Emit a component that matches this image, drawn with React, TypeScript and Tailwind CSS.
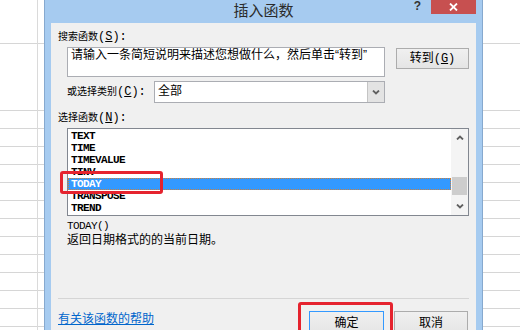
import React from 'react';

const functions = ['TEXT', 'TIME', 'TIMEVALUE', 'TINV', 'TODAY', 'TRANSPOSE', 'TREND'];
const selectedFn = 'TODAY';

// spreadsheet rows peeking out behind the dialog
const rowHeights = ['h-[44px]', 'h-[67px]', ...Array(12).fill('h-[18px]')];

const SheetColumn: React.FC<{ className?: string }> = ({ className = '' }) => (
  <div className={`flex flex-col ${className}`}>
    {rowHeights.map((h, i) => (
      <div key={i} className={`${h} shrink-0 border-b border-[#d6d6d6]`} />
    ))}
  </div>
);

const Chevron: React.FC<{ up?: boolean }> = ({ up }) => (
  <svg width="8" height="5" viewBox="0 0 8 5" className="block">
    <polyline
      points={up ? '1,4.5 4,1.5 7,4.5' : '1,0.5 4,3.5 7,0.5'}
      fill="none"
      stroke="#606060"
      strokeWidth="1.8"
    />
  </svg>
);

const App: React.FC = () => {
  return (
    <div className="relative flex h-[330px] w-[520px] overflow-hidden bg-white font-['Liberation_Sans','Noto_Sans_CJK_SC',sans-serif] text-black">
      {/* left edge of the sheet */}
      <div className="flex w-[44px] shrink-0">
        <SheetColumn className="w-[38px] border-r border-[#dadada]" />
        <SheetColumn className="w-[6px]" />
      </div>

      {/* dialog */}
      <div className="flex w-[439px] shrink-0 flex-col border-x border-[#86a9cf] bg-[#a6cbf0]">
        {/* title bar */}
        <div className="grid h-[23px] shrink-0 grid-cols-[1fr_auto_1fr]">
          <div />
          <div className="text-[15px] leading-[22px] text-[#2b2b2b]">插入函数</div>
          <div className="flex items-start justify-end pr-[6px]">
            <span className="mr-[10px] font-['Liberation_Sans',sans-serif] text-[12px] font-bold leading-[13px] text-[#333]">?</span>
            <div className="flex h-[14px] w-[45px] items-center justify-center bg-[#c75050]">
              <svg width="9" height="8" viewBox="0 0 9 8">
                <path d="M1 0.5 L8 7.5 M8 0.5 L1 7.5" stroke="#fff" strokeWidth="1.8" />
              </svg>
            </div>
          </div>
        </div>

        {/* body */}
        <div className="mx-[6px] flex flex-1 flex-col bg-[#f0f0f0] px-[7px]">
          <div className="mt-[8px] flex h-[12px] items-center text-[10px] leading-[12px]">
            搜索函数
            <span className="font-['Liberation_Mono',monospace] text-[12px] leading-[12px]">
              (<span className="underline">S</span>):
            </span>
          </div>

          <div className="ml-[9px] mt-[4px] flex items-start gap-[11px]">
            <div className="h-[30px] w-[318px] border border-[#abadb3] bg-white pl-[3px] text-[12px] leading-[14px]">
              请输入一条简短说明来描述您想做什么，然后单击“转到”
            </div>
            <button
              type="button"
              className="mt-[1px] h-[21px] w-[73px] border border-[#acacac] bg-gradient-to-b from-[#f0f0f0] to-[#e5e5e5] text-[12px] leading-[14px]"
            >
              转到<span className="font-['Liberation_Mono',monospace]">(<span className="underline">G</span>)</span>
            </button>
          </div>

          <div className="ml-[9px] mt-[4px] flex h-[22px] items-center">
            <div className="w-[87px] text-[10px] leading-[12px]">
              或选择类别
              <span className="font-['Liberation_Mono',monospace] text-[12px] leading-[12px]">
                (<span className="underline">C</span>):
              </span>
            </div>
            <div className="flex h-[22px] w-[231px] border border-[#abadb3] bg-white">
              <div className="flex-1 pl-[3px] text-[12px] leading-[19px]">全部</div>
              <div className="flex w-[17px] items-center justify-center border-l border-[#c4c4c4] bg-[#e3e3e3]">
                <Chevron />
              </div>
            </div>
          </div>

          <div className="mt-[9px] flex h-[12px] items-center text-[10px] leading-[12px]">
            选择函数
            <span className="font-['Liberation_Mono',monospace] text-[12px] leading-[12px]">
              (<span className="underline">N</span>):
            </span>
          </div>

          {/* function list */}
          <div className="ml-[9px] mt-[4px] flex h-[88px] w-[402px] border border-[#828790] bg-white">
            <div className="flex-1 pt-[1px]">
              {functions.map(fn => (
                <div
                  key={fn}
                  className={`h-[12px] pl-[3px] font-['Liberation_Mono',monospace] text-[11px] font-bold leading-[12px] tracking-[-0.6px] ${
                    fn === selectedFn
                      ? 'bg-[#3399ff] text-white outline-1 -outline-offset-1 outline-dotted outline-[#c9803f]'
                      : 'text-black'
                  }`}
                >
                  {fn}
                </div>
              ))}
            </div>
            <div className="flex w-[17px] flex-col bg-[#f4f4f4]">
              <div className="flex h-[17px] items-center justify-center">
                <Chevron up />
              </div>
              <div className="flex-1 px-[1px]">
                <div className="mt-[31px] h-[18px] bg-[#cdcdcd]" />
              </div>
              <div className="flex h-[17px] items-center justify-center">
                <Chevron />
              </div>
            </div>
          </div>

          <div className="ml-[9px] mt-[4px] font-['Liberation_Mono',monospace] text-[11px] leading-[12px] tracking-[-0.6px]">
            TODAY()
          </div>
          <div className="ml-[9px] mt-[1px] text-[12px] leading-[14px]">返回日期格式的的当前日期。</div>

          <div className="mt-[51px] h-px bg-[#d5d5d5]" />

          <div className="mt-[12px] flex items-start">
            <a href="#" className="mt-[1px] text-[12px] leading-[14px] text-[#0066cc] underline">
              有关该函数的帮助
            </a>
            <div className="ml-auto mr-[1px] flex gap-[10px]">
              <button
                type="button"
                className="h-[23px] w-[75px] border border-[#3399ff] bg-gradient-to-b from-[#f0f0f0] to-[#e5e5e5] text-[12px] leading-[14px]"
              >
                确定
              </button>
              <button
                type="button"
                className="h-[23px] w-[74px] border border-[#acacac] bg-gradient-to-b from-[#f0f0f0] to-[#e5e5e5] text-[12px] leading-[14px]"
              >
                取消
              </button>
            </div>
          </div>
        </div>
      </div>

      {/* right edge of the sheet */}
      <SheetColumn className="w-[37px]" />

      {/* red annotation boxes */}
      <div className="absolute left-[60px] top-[171px] h-[23px] w-[103px] rounded-[3px] border-[3px] border-[#e5232e]" />
      <div className="absolute left-[298px] top-[302px] h-[40px] w-[95px] rounded-[3px] border-[3px] border-[#e5232e]" />
    </div>
  );
};

export default App;
